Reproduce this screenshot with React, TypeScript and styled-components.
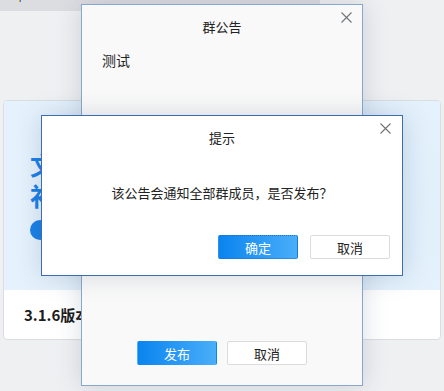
import React from 'react'
import styled, { createGlobalStyle } from 'styled-components'

const GlobalStyle = createGlobalStyle`
    html, body {
        margin: 0;
        padding: 0;
        background: #eff0f2;
        font-family: "Noto Sans CJK SC", "Noto Sans", sans-serif;
    }
`

const Page = styled.div`
    position: relative;
    width: 444px;
    height: 391px;
    overflow: hidden;
    background: #eff0f2;
`

const TopBar = styled.div`
    position: relative;
    width: 320px;
    height: 11px;
    background: #dcdde1;
`

const TopMark = styled.span`
    position: absolute;
    left: 19px;
    top: 0;
    width: 2px;
    height: 2px;
    background: linear-gradient(90deg, #f0a030 50%, #2d7fe0 50%);
`

const Card = styled.div`
    margin: 89px 0 0 3px;
    width: 436px;
    height: 238px;
    border: 1px solid #dadde2;
    border-radius: 4px;
    background: #fff;
    overflow: hidden;
    display: flex;
    flex-direction: column;
`

const Banner = styled.div`
    height: 189px;
    background: radial-gradient(ellipse 140px 180px at 380px 100px, #dfeefb 0%, #e5f2fd 70%), #e5f2fd;
    display: flex;
    flex-direction: column;
    align-items: flex-start;
    padding: 48px 0 0 26px;
    box-sizing: border-box;
`

const BannerText = styled.div`
    color: #1a80e8;
    font-size: 25px;
    font-weight: 700;
    line-height: 31px;
`

const BannerDot = styled.div`
    margin-top: 9px;
    width: 20px;
    height: 20px;
    border-radius: 50%;
    background: #1a80e8;
`

const CardFooter = styled.div`
    flex: 1;
    display: flex;
    align-items: center;
    padding-left: 20px;
    font-size: 15px;
    font-weight: 700;
    color: #1c1c1c;
`

const Dialog = styled.div<{ $left: number; $top: number; $w: number; $h: number; $border: string; $bg: string }>`
    position: absolute;
    left: ${p => p.$left}px;
    top: ${p => p.$top}px;
    width: ${p => p.$w}px;
    height: ${p => p.$h}px;
    box-sizing: border-box;
    border: 1px solid ${p => p.$border};
    background: ${p => p.$bg};
    box-shadow: 0 0 24px rgba(40, 60, 90, 0.18);
    display: flex;
    flex-direction: column;
    color: #222;
`

const DialogHeader = styled.div<{ $h: number }>`
    position: relative;
    height: ${p => p.$h}px;
    display: flex;
    align-items: center;
    justify-content: center;
    font-size: 13px;
`

const CloseBtn = styled.span<{ $right: number; $top: number }>`
    position: absolute;
    right: ${p => p.$right}px;
    top: ${p => p.$top}px;
    width: 11px;
    height: 11px;
    display: flex;
`

const NoticeBody = styled.div`
    flex: 1;
    padding: 3px 20px 0;
    font-size: 14px;
`

const Message = styled.div`
    flex: 1;
    display: flex;
    justify-content: center;
    padding: 25px 0 0 0;
    font-size: 13px;
    box-sizing: border-box;
`

const Footer = styled.div<{ $align: string; $pad: string; $gap: number }>`
    display: flex;
    justify-content: ${p => p.$align};
    gap: ${p => p.$gap}px;
    padding: ${p => p.$pad};
`

const Button = styled.button<{ $primary?: boolean; $focus?: boolean }>`
    width: 80px;
    height: 24px;
    box-sizing: border-box;
    border-radius: 2px;
    font-family: inherit;
    font-size: 13px;
    padding: 0;
    cursor: pointer;
    color: ${p => (p.$primary ? '#fff' : '#222')};
    background: ${p => (p.$primary ? 'linear-gradient(90deg, #0a84ef, #4aaefa)' : '#fff')};
    border: 1px ${p => (p.$focus ? 'dotted' : 'solid')} ${p => (p.$primary ? (p.$focus ? '#1f6fc4' : 'transparent') : '#dcdcdc')};
`

function CloseIcon() {
    return (
        <svg width="11" height="11" viewBox="0 0 11 11">
            <path d="M0.5 0.5L10.5 10.5M10.5 0.5L0.5 10.5" stroke="#6f7378" strokeWidth="1.1" />
        </svg>
    )
}

function App() {
    return (
        <Page>
            <GlobalStyle />
            <TopBar>
                <TopMark />
            </TopBar>
            <Card>
                <Banner>
                    <BannerText>文</BannerText>
                    <BannerText>补</BannerText>
                    <BannerDot />
                </Banner>
                <CardFooter>3.1.6版本更新</CardFooter>
            </Card>

            <Dialog $left={81} $top={4} $w={282} $h={382} $border="#89a6cd" $bg="#f9f9f9">
                <DialogHeader $h={42}>
                    群公告
                    <CloseBtn $right={10} $top={7}><CloseIcon /></CloseBtn>
                </DialogHeader>
                <NoticeBody>测试</NoticeBody>
                <Footer $align="center" $pad="0 0 20px" $gap={10}>
                    <Button $primary>发布</Button>
                    <Button>取消</Button>
                </Footer>
            </Dialog>

            <Dialog $left={41} $top={115} $w={362} $h={161} $border="#3c6cb4" $bg="#fff">
                <DialogHeader $h={42}>
                    提示
                    <CloseBtn $right={11} $top={7}><CloseIcon /></CloseBtn>
                </DialogHeader>
                <Message>该公告会通知全部群成员，是否发布？</Message>
                <Footer $align="flex-end" $pad="0 12px 16px" $gap={12}>
                    <Button $primary $focus>确定</Button>
                    <Button>取消</Button>
                </Footer>
            </Dialog>
        </Page>
    )
}

export default App
